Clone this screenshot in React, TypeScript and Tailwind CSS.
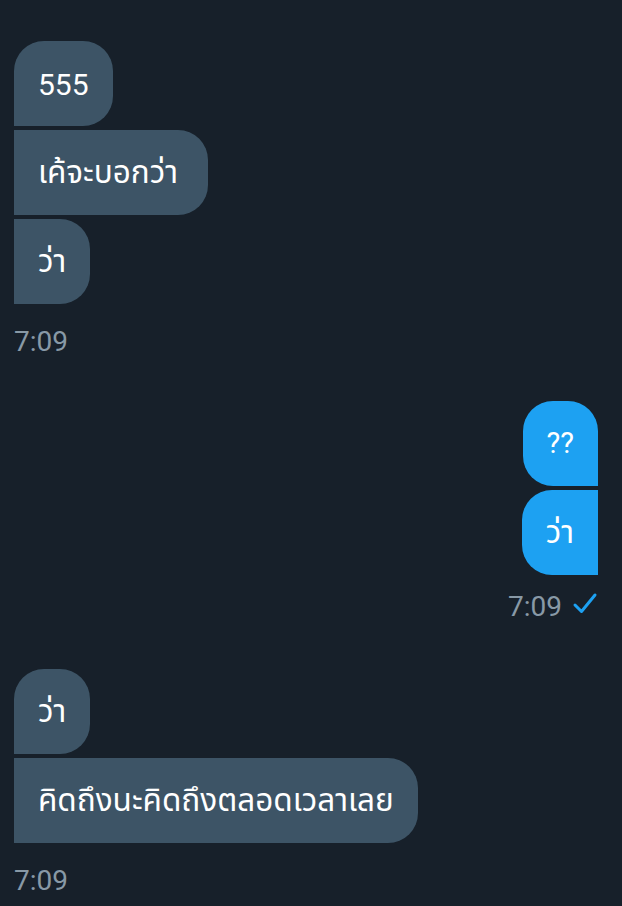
import React from "react";

const font = { fontFamily: 'Roboto, "Noto Sans", "Noto Sans Thai", sans-serif' };

function Left({ text, first, thai, extra }: { text: string; first?: boolean; thai?: boolean; extra?: string }) {
  return (
    <div
      className={`self-start h-[85px] flex items-center px-[24px] bg-[#3d5466] text-white rounded-r-[30px] ${thai ? "text-[31.5px]" : "text-[30px] pt-[2px]"} ${first ? "rounded-tl-[30px]" : ""} ${extra ?? ""}`}
    >
      {text}
    </div>
  );
}

function Right({ text, first, thai }: { text: string; first?: boolean; thai?: boolean }) {
  return (
    <div
      className={`self-end h-[85px] flex items-center px-[24px] bg-[#1da1f2] text-white rounded-l-[30px] ${thai ? "text-[31.5px]" : "text-[29px]"} ${first ? "rounded-tr-[30px]" : ""}`}
    >
      {text}
    </div>
  );
}

export default function App() {
  return (
    <div className="w-[622px] h-[906px] bg-[#17202a] overflow-hidden flex flex-col px-[14px] pt-[41px] pr-[24px]" style={font}>
      <div className="flex flex-col gap-[4px]">
        <Left text="555" first />
        <Left text="เค้จะบอกว่า" thai extra="pr-[30px]" />
        <Left text="ว่า" thai />
      </div>
      <div className="mt-[20px] h-[36px] leading-[36px] text-[28px] text-[#8899a6]">7:09</div>
      <div className="mt-[41px] flex flex-col gap-[4px]">
        <Right text="??" first />
        <Right text="ว่า" thai />
      </div>
      <div className="mt-[14px] h-[36px] self-end flex items-center gap-[10px] text-[28px] text-[#8899a6]">
        <span className="leading-[36px]">7:09</span>
        <svg width="26" height="24" viewBox="0 0 26 24" className="mb-[6px]">
          <path d="M3 13 L9.5 19.5 L23 3" fill="none" stroke="#1da1f2" strokeWidth="3" strokeLinecap="round" strokeLinejoin="round" />
        </svg>
      </div>
      <div className="mt-[44px] flex flex-col gap-[4px]">
        <Left text="ว่า" first thai />
        <Left text="คิดถึงนะคิดถึงตลอดเวลาเลย" thai />
      </div>
      <div className="mt-[20px] h-[36px] leading-[36px] text-[28px] text-[#8899a6]">7:09</div>
    </div>
  );
}
